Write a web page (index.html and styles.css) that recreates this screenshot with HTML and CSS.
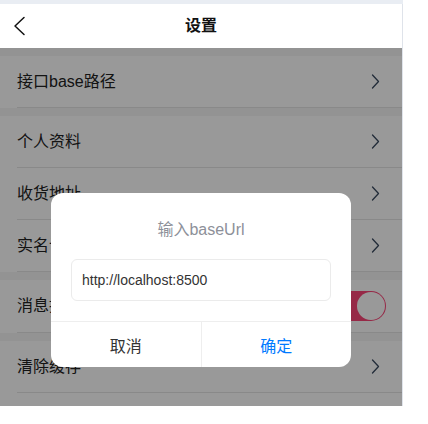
FILE: index.html
```html
<!DOCTYPE html>
<html lang="zh-CN">
<head>
<meta charset="utf-8">
<title>设置</title>
<link rel="stylesheet" href="styles.css">
</head>
<body>
<div class="frame">
  <div class="phone">
    <header class="nav">
      <svg class="nav-back" width="14" height="20" viewBox="0 0 14 20"><polyline points="11,1.5 2,10 11,18.5" fill="none" stroke="#111" stroke-width="1.5" stroke-linecap="round" stroke-linejoin="round"/></svg>
      <span class="nav-title">设置</span>
    </header>
    <main class="content">
      <div class="group">
        <div class="cell"><span class="cell-label">接口base路径</span><svg class="arrow" width="9" height="15" viewBox="0 0 9 15"><polyline points="1.5,1 7.5,7.5 1.5,14" fill="none" stroke="#3a4a60" stroke-width="1.3" stroke-linecap="round" stroke-linejoin="round"/></svg></div>
      </div>
      <div class="group">
        <div class="cell"><span class="cell-label">个人资料</span><svg class="arrow" width="9" height="15" viewBox="0 0 9 15"><polyline points="1.5,1 7.5,7.5 1.5,14" fill="none" stroke="#3a4a60" stroke-width="1.3" stroke-linecap="round" stroke-linejoin="round"/></svg></div>
        <div class="cell"><span class="cell-label">收货地址</span><svg class="arrow" width="9" height="15" viewBox="0 0 9 15"><polyline points="1.5,1 7.5,7.5 1.5,14" fill="none" stroke="#3a4a60" stroke-width="1.3" stroke-linecap="round" stroke-linejoin="round"/></svg></div>
        <div class="cell"><span class="cell-label">实名认证</span><svg class="arrow" width="9" height="15" viewBox="0 0 9 15"><polyline points="1.5,1 7.5,7.5 1.5,14" fill="none" stroke="#3a4a60" stroke-width="1.3" stroke-linecap="round" stroke-linejoin="round"/></svg></div>
      </div>
      <div class="group">
        <div class="cell cell-switch"><span class="cell-label">消息推送</span><span class="switch"><span class="switch-knob"></span></span></div>
      </div>
      <div class="group group-last">
        <div class="cell"><span class="cell-label">清除缓存</span><svg class="arrow" width="9" height="15" viewBox="0 0 9 15"><polyline points="1.5,1 7.5,7.5 1.5,14" fill="none" stroke="#3a4a60" stroke-width="1.3" stroke-linecap="round" stroke-linejoin="round"/></svg></div>
      </div>
      <div class="mask"></div>
    </main>
    <div class="dialog">
      <div class="dialog-title">输入baseUrl</div>
      <div class="dialog-input">http://localhost:8500</div>
      <div class="dialog-actions">
        <div class="dialog-btn">取消</div>
        <div class="dialog-btn dialog-btn-primary">确定</div>
      </div>
    </div>
  </div>
</div>
</body>
</html>
```
FILE: styles.css
```css
* { box-sizing: border-box; }
html, body {
  margin: 0;
  padding: 0;
  background: #fff;
}
body {
  font-family: "Liberation Sans", "Noto Sans CJK SC", sans-serif;
  color: #333;
}
.frame {
  width: 403px;
  padding-top: 4px;
  background: #e9edf3;
}
.phone {
  position: relative;
  width: 403px;
  height: 402px;
  background: #fff;
  border-right: 1px solid #dfe3ea;
  display: flex;
  flex-direction: column;
}
.nav {
  position: relative;
  height: 44px;
  flex: none;
  display: flex;
  align-items: center;
  justify-content: center;
  background: #fff;
}
.nav-back {
  position: absolute;
  left: 13px;
  top: 12px;
}
.nav-title {
  font-size: 16px;
  font-weight: bold;
  color: #111;
  line-height: 20px;
}
.content {
  position: relative;
  flex: 1;
  overflow: hidden;
  background: #f5f5f5;
}
.group {
  margin-top: 8px;
  background: #fff;
}
.group-last {
  padding-bottom: 40px;
}
.cell {
  height: 52px;
  margin-left: 17px;
  padding-right: 22px;
  border-bottom: 1px solid #e4e4e4;
  display: flex;
  align-items: center;
  justify-content: space-between;
}
.cell-label {
  font-size: 16px;
  line-height: 20px;
  color: #222;
}
.cell-switch {
  height: 53px;
  padding-right: 16px;
}
.switch {
  width: 50px;
  height: 30px;
  border-radius: 15px;
  background: #fa4577;
  display: flex;
  justify-content: flex-end;
  align-items: center;
  padding: 1px;
}
.switch-knob {
  width: 28px;
  height: 28px;
  border-radius: 50%;
  background: #fff;
}
.mask {
  position: absolute;
  inset: 0;
  background: rgba(0, 0, 0, 0.4);
}
.dialog {
  position: absolute;
  left: 51px;
  top: 189px;
  width: 300px;
  background: #fff;
  border-radius: 12px;
  overflow: hidden;
}
.dialog-title {
  padding-top: 25px;
  font-size: 16px;
  line-height: 24px;
  color: #8d9099;
  text-align: center;
}
.dialog-input {
  margin: 17px 20px 0;
  height: 42px;
  border: 1px solid #ebebeb;
  border-radius: 6px;
  padding: 0 10px;
  display: flex;
  align-items: center;
  font-size: 14px;
  color: #333;
}
.dialog-actions {
  margin-top: 20px;
  border-top: 1px solid #eee;
  display: flex;
}
.dialog-btn {
  flex: 1;
  height: 45px;
  display: flex;
  align-items: center;
  justify-content: center;
  font-size: 16px;
  color: #333;
}
.dialog-btn + .dialog-btn {
  border-left: 1px solid #eee;
}
.dialog-btn-primary {
  color: #007aff;
}
```
